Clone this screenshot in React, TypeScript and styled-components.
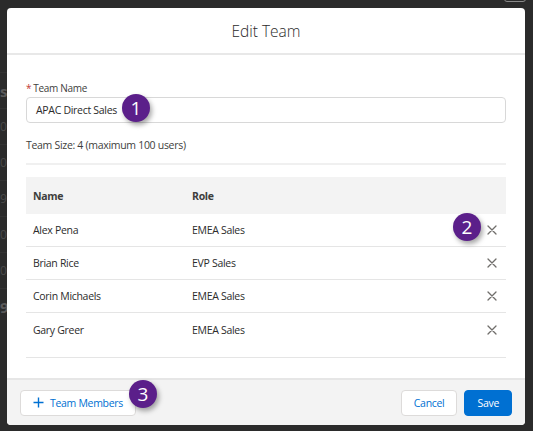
import styled, { createGlobalStyle } from "styled-components";

const GlobalStyle = createGlobalStyle`
  html, body {
    margin: 0;
    padding: 0;
    background: #2b2b2b;
  }
  body {
    font-family: "Open Sans", "Noto Sans", Arial, sans-serif;
    color: #3e3e3c;
    letter-spacing: -0.3px;
  }
  * { box-sizing: border-box; }
`;

const Page = styled.div`
  position: relative;
  width: 533px;
  height: 431px;
  overflow: hidden;
  background: #2b2b2b;
`;

const BehindList = styled.div`
  display: flex;
  flex-direction: column;
  width: 60px;
  padding-top: 72px;
`;

const BehindRow = styled.div<{ $bold?: boolean }>`
  height: 36px;
  display: flex;
  align-items: center;
  border-top: 1px solid #333;
  font-size: ${({ $bold }) => ($bold ? "15px" : "12px")};
  font-weight: ${({ $bold }) => ($bold ? 700 : 400)};
  color: ${({ $bold }) => ($bold ? "#5a5a5a" : "#4a4a4a")};
  white-space: nowrap;
`;

const CloseBox = styled.div`
  position: absolute;
  top: -14px;
  right: 7px;
  width: 22px;
  height: 16px;
  border: 1px solid #8a8a8a;
  border-radius: 3px;
`;

const Modal = styled.div`
  position: absolute;
  left: 7px;
  top: 8px;
  width: 518px;
  height: 417px;
  background: #fff;
  border-radius: 4px;
  display: flex;
  flex-direction: column;
  overflow: hidden;
`;

const Header = styled.div`
  height: 47px;
  flex-shrink: 0;
  display: flex;
  align-items: center;
  justify-content: center;
  border-bottom: 2px solid #e8e8e8;
`;

const Title = styled.h2`
  margin: 0;
  font-size: 15.5px;
  font-weight: 300;
  color: #2b2b2b;
  letter-spacing: 0;
`;

const Body = styled.div`
  flex: 1;
  padding: 26px 19px 0;
  display: flex;
  flex-direction: column;
`;

const Label = styled.label`
  font-size: 10px;
  color: #3e3e3c;
  line-height: 14px;
  margin-bottom: 2px;
`;

const Required = styled.abbr`
  color: #c23934;
  text-decoration: none;
  margin-right: 2px;
`;

const Input = styled.div`
  height: 26px;
  border: 1px solid #d8d8d8;
  border-radius: 4px;
  display: flex;
  align-items: center;
  padding-left: 9px;
  font-size: 10.5px;
  color: #2b2b2b;
`;

const Hint = styled.div`
  font-size: 10.5px;
  color: #3e3e3c;
  margin-top: 14px;
  line-height: 16px;
  padding-bottom: 10px;
  border-bottom: 2px solid #f0f0f0;
`;

const Table = styled.div`
  margin-top: 12px;
  display: flex;
  flex-direction: column;
  padding-bottom: 11px;
  border-bottom: 1px solid #e5e5e5;
`;

const Row = styled.div<{ $head?: boolean; $last?: boolean }>`
  display: grid;
  grid-template-columns: 159px 1fr 28px;
  align-items: center;
  height: ${({ $head }) => ($head ? "37px" : "33px")};
  padding-left: 7px;
  background: ${({ $head }) => ($head ? "#f3f3f3" : "#fff")};
  border-bottom: ${({ $head, $last }) => ($head || $last ? "none" : "1px solid #e5e5e5")};
  font-size: 10.5px;
  font-weight: ${({ $head }) => ($head ? 700 : 400)};
  color: ${({ $head }) => ($head ? "#3e3e3c" : "#2b2b2b")};
`;

const RemoveButton = styled.button`
  border: none;
  background: none;
  padding: 0;
  width: 28px;
  display: flex;
  align-items: center;
  justify-content: center;
  cursor: pointer;
`;

const Footer = styled.div`
  height: 47px;
  flex-shrink: 0;
  background: #f3f3f3;
  border-top: 2px solid #e6e6e6;
  display: flex;
  align-items: center;
  padding: 0 13px;
  gap: 7px;
`;

const Button = styled.button<{ $brand?: boolean }>`
  height: 26px;
  border-radius: 4px;
  font-family: inherit;
  letter-spacing: -0.3px;
  font-size: 10.5px;
  padding: 0 12px;
  display: flex;
  align-items: center;
  gap: 6px;
  border: 1px solid ${({ $brand }) => ($brand ? "#0070d2" : "#dddbda")};
  background: ${({ $brand }) => ($brand ? "#0070d2" : "#fff")};
  color: ${({ $brand }) => ($brand ? "#fff" : "#0070d2")};
  cursor: pointer;
`;

const Spacer = styled.div`
  flex: 1;
`;

const Badge = styled.div<{ $x: number; $y: number }>`
  position: absolute;
  left: ${({ $x }) => $x - 14}px;
  top: ${({ $y }) => $y - 14}px;
  width: 28px;
  height: 28px;
  border-radius: 50%;
  background: #5b1f8a;
  color: #fff;
  font-size: 19px;
  letter-spacing: 0;
  display: flex;
  align-items: center;
  justify-content: center;
  box-shadow: 2px 3px 5px rgba(0, 0, 0, 0.35);
`;

const CloseIcon = () => (
  <svg width="10" height="10" viewBox="0 0 10 10">
    <path d="M1 1 L9 9 M9 1 L1 9" stroke="#706e6b" strokeWidth="1.3" strokeLinecap="round" />
  </svg>
);

const PlusIcon = () => (
  <svg width="11" height="11" viewBox="0 0 11 11">
    <path d="M5.5 0.5 V10.5 M0.5 5.5 H10.5" stroke="#0070d2" strokeWidth="1.4" />
  </svg>
);

const members = [
  { name: "Alex Pena", role: "EMEA Sales" },
  { name: "Brian Rice", role: "EVP Sales" },
  { name: "Corin Michaels", role: "EMEA Sales" },
  { name: "Gary Greer", role: "EMEA Sales" },
];

const behind = ["si", "00", "00", "90", "00", "00", "9"];

export default function App() {
  return (
    <Page>
      <GlobalStyle />
      <BehindList>
        {behind.map((t, i) => (
          <BehindRow key={i} $bold={i === 0 || i === behind.length - 1}>
            {t}
          </BehindRow>
        ))}
      </BehindList>
      <CloseBox />
      <Modal>
        <Header>
          <Title>Edit Team</Title>
        </Header>
        <Body>
          <Label>
            <Required title="required">*</Required>Team Name
          </Label>
          <Input>APAC Direct Sales</Input>
          <Hint>Team Size: 4 (maximum 100 users)</Hint>
          <Table>
            <Row $head>
              <span>Name</span>
              <span>Role</span>
              <span />
            </Row>
            {members.map((m, i) => (
              <Row key={m.name} $last={i === members.length - 1}>
                <span>{m.name}</span>
                <span>{m.role}</span>
                <RemoveButton aria-label={`Remove ${m.name}`}>
                  <CloseIcon />
                </RemoveButton>
              </Row>
            ))}
          </Table>
        </Body>
        <Footer>
          <Button>
            <PlusIcon />
            Team Members
          </Button>
          <Spacer />
          <Button>Cancel</Button>
          <Button $brand>Save</Button>
        </Footer>
        <Badge $x={129} $y={100}>1</Badge>
        <Badge $x={460} $y={219}>2</Badge>
        <Badge $x={136} $y={386}>3</Badge>
      </Modal>
    </Page>
  );
}
